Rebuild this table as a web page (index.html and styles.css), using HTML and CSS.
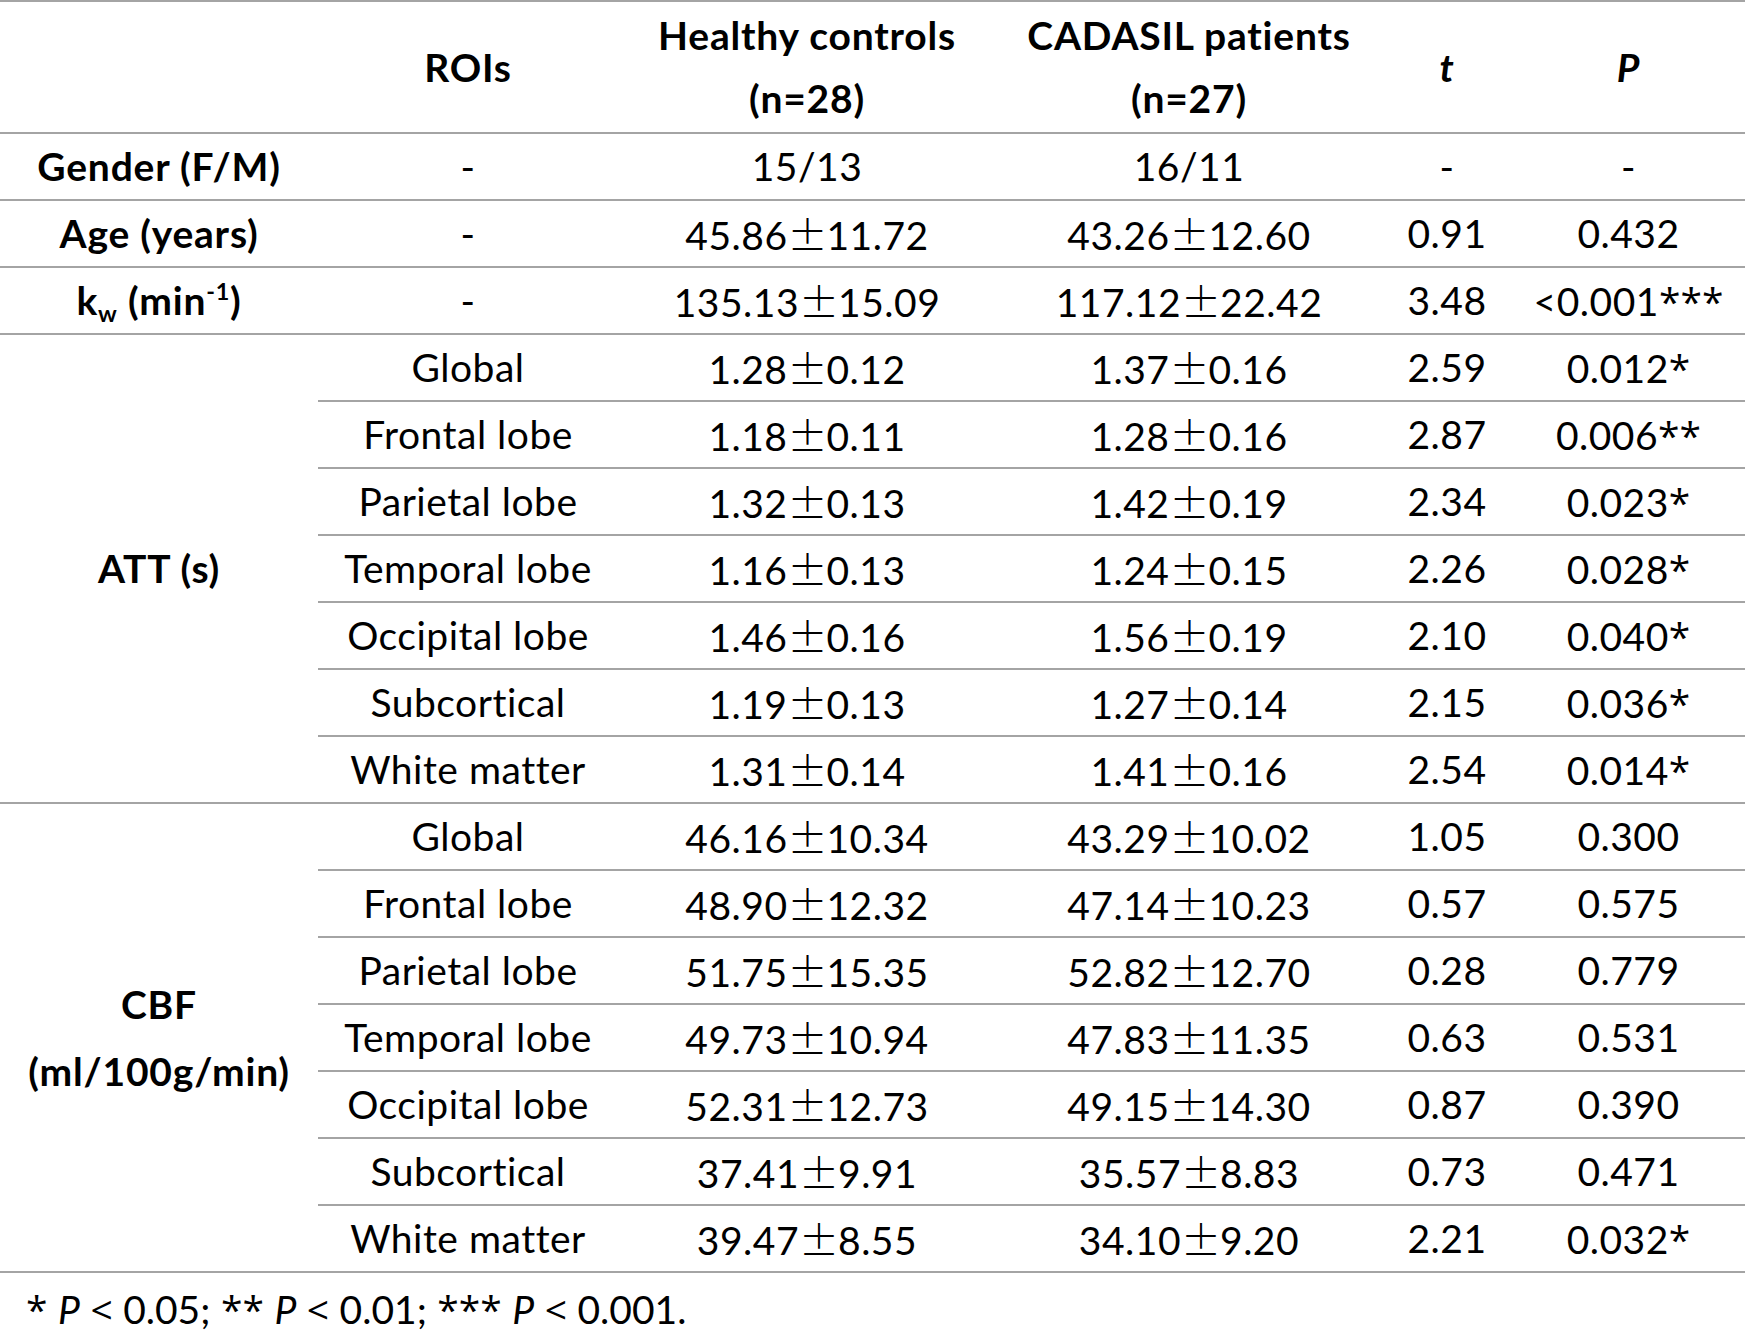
FILE: index.html
```html
<!DOCTYPE html>
<html lang="en">
<head>
<meta charset="utf-8">
<title>ATT and CBF comparison</title>
<link rel="stylesheet" href="styles.css">
</head>
<body>
<div class="tbl">
  <div class="c hd"></div>
  <div class="c hd b">ROIs</div>
  <div class="c hd b two"><span>Healthy controls</span><span>(n=28)</span></div>
  <div class="c hd b two"><span>CADASIL patients</span><span>(n=27)</span></div>
  <div class="c hd b"><i>t</i></div>
  <div class="c hd b"><i>P</i></div>

  <div class="c b">Gender (F/M)</div>
  <div class="c">-</div>
  <div class="c">15/13</div>
  <div class="c">16/11</div>
  <div class="c">-</div>
  <div class="c">-</div>

  <div class="c b">Age (years)</div>
  <div class="c">-</div>
  <div class="c">45.86<span class="pm">±</span>11.72</div>
  <div class="c">43.26<span class="pm">±</span>12.60</div>
  <div class="c">0.91</div>
  <div class="c">0.432</div>

  <div class="c b">k<sub>w</sub> (min<sup>-1</sup>)</div>
  <div class="c">-</div>
  <div class="c">135.13<span class="pm">±</span>15.09</div>
  <div class="c">117.12<span class="pm">±</span>22.42</div>
  <div class="c">3.48</div>
  <div class="c">&lt;0.001<span class="ast">***</span></div>

  <div class="c b grp">ATT (s)</div>
  <div class="c">Global</div>
  <div class="c">1.28<span class="pm">±</span>0.12</div>
  <div class="c">1.37<span class="pm">±</span>0.16</div>
  <div class="c">2.59</div>
  <div class="c">0.012<span class="ast">*</span></div>

  <div class="c">Frontal lobe</div>
  <div class="c">1.18<span class="pm">±</span>0.11</div>
  <div class="c">1.28<span class="pm">±</span>0.16</div>
  <div class="c">2.87</div>
  <div class="c">0.006<span class="ast">**</span></div>

  <div class="c">Parietal lobe</div>
  <div class="c">1.32<span class="pm">±</span>0.13</div>
  <div class="c">1.42<span class="pm">±</span>0.19</div>
  <div class="c">2.34</div>
  <div class="c">0.023<span class="ast">*</span></div>

  <div class="c">Temporal lobe</div>
  <div class="c">1.16<span class="pm">±</span>0.13</div>
  <div class="c">1.24<span class="pm">±</span>0.15</div>
  <div class="c">2.26</div>
  <div class="c">0.028<span class="ast">*</span></div>

  <div class="c">Occipital lobe</div>
  <div class="c">1.46<span class="pm">±</span>0.16</div>
  <div class="c">1.56<span class="pm">±</span>0.19</div>
  <div class="c">2.10</div>
  <div class="c">0.040<span class="ast">*</span></div>

  <div class="c">Subcortical</div>
  <div class="c">1.19<span class="pm">±</span>0.13</div>
  <div class="c">1.27<span class="pm">±</span>0.14</div>
  <div class="c">2.15</div>
  <div class="c">0.036<span class="ast">*</span></div>

  <div class="c">White matter</div>
  <div class="c">1.31<span class="pm">±</span>0.14</div>
  <div class="c">1.41<span class="pm">±</span>0.16</div>
  <div class="c">2.54</div>
  <div class="c">0.014<span class="ast">*</span></div>

  <div class="c b grp two cbf"><span>CBF</span><span>(ml/100g/min)</span></div>
  <div class="c">Global</div>
  <div class="c">46.16<span class="pm">±</span>10.34</div>
  <div class="c">43.29<span class="pm">±</span>10.02</div>
  <div class="c">1.05</div>
  <div class="c">0.300</div>

  <div class="c">Frontal lobe</div>
  <div class="c">48.90<span class="pm">±</span>12.32</div>
  <div class="c">47.14<span class="pm">±</span>10.23</div>
  <div class="c">0.57</div>
  <div class="c">0.575</div>

  <div class="c">Parietal lobe</div>
  <div class="c">51.75<span class="pm">±</span>15.35</div>
  <div class="c">52.82<span class="pm">±</span>12.70</div>
  <div class="c">0.28</div>
  <div class="c">0.779</div>

  <div class="c">Temporal lobe</div>
  <div class="c">49.73<span class="pm">±</span>10.94</div>
  <div class="c">47.83<span class="pm">±</span>11.35</div>
  <div class="c">0.63</div>
  <div class="c">0.531</div>

  <div class="c">Occipital lobe</div>
  <div class="c">52.31<span class="pm">±</span>12.73</div>
  <div class="c">49.15<span class="pm">±</span>14.30</div>
  <div class="c">0.87</div>
  <div class="c">0.390</div>

  <div class="c">Subcortical</div>
  <div class="c">37.41<span class="pm">±</span>9.91</div>
  <div class="c">35.57<span class="pm">±</span>8.83</div>
  <div class="c">0.73</div>
  <div class="c">0.471</div>

  <div class="c">White matter</div>
  <div class="c">39.47<span class="pm">±</span>8.55</div>
  <div class="c">34.10<span class="pm">±</span>9.20</div>
  <div class="c">2.21</div>
  <div class="c">0.032<span class="ast">*</span></div>
</div>
<p class="note"><span class="ast">*</span> <i>P</i> <span class="lt">&lt;</span> 0.05; <span class="ast">**</span> <i>P</i> <span class="lt">&lt;</span> 0.01; <span class="ast">***</span> <i>P</i> <span class="lt">&lt;</span> 0.001.</p>
</body>
</html>
```
FILE: styles.css
```css
html, body {
  margin: 0;
  padding: 0;
  background: #ffffff;
}
body {
  font-family: "Lato", "Noto Sans", sans-serif;
  font-size: 39px;
  letter-spacing: 0.5px;
  color: #000000;
  width: 1745px;
}
.tbl {
  display: grid;
  grid-template-columns: 318px 300px 378px 386px 130px 233px;
  grid-template-rows: 132px;
  grid-auto-rows: 67px;
  border-top: 2px solid #a4a4a4;
}
.c {
  box-sizing: border-box;
  border-bottom: 2px solid #a4a4a4;
  white-space: nowrap;
  text-align: center;
  line-height: 65px;
}
.b {
  font-weight: 700;
  letter-spacing: 0.8px;
}
.hd,
.grp {
  display: flex;
  align-items: center;
  justify-content: center;
  line-height: 63px;
}
.two {
  flex-direction: column;
}
.two span {
  display: block;
}
.grp {
  grid-row: span 7;
}
.cbf {
  line-height: 67px;
}
.pm {
  display: inline-block;
  width: 39px;
  text-align: center;
  font-family: "Noto Sans CJK SC", "DejaVu Sans", sans-serif;
  font-weight: 300;
  font-size: 40px;
  letter-spacing: 0;
}
.ast {
  font-family: "Open Sans", "Lato", sans-serif;
  letter-spacing: 0;
}
sub {
  font-size: 0.6em;
  vertical-align: -7px;
  line-height: 0;
}
sup {
  font-size: 0.6em;
  vertical-align: 15px;
  line-height: 0;
}
.note {
  margin: 0;
  padding: 14px 0 0 26px;
  line-height: 44px;
  letter-spacing: 0;
  word-spacing: 0.5px;
}
.lt {
  font-family: "Open Sans", "Lato", sans-serif;
}
```
